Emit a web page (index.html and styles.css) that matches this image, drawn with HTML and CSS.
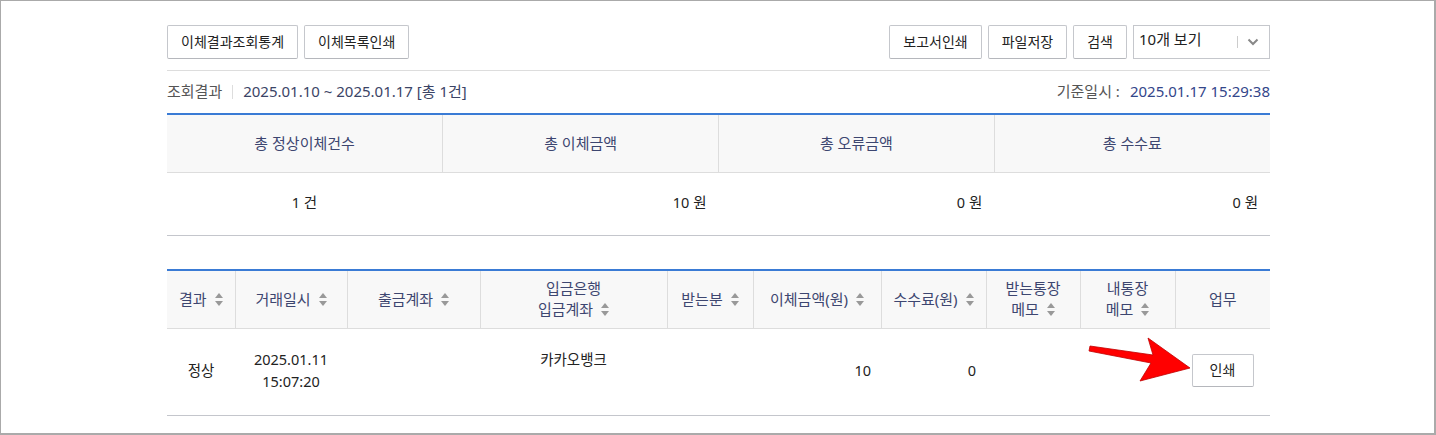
FILE: index.html
```html
<!DOCTYPE html>
<html lang="ko">
<head>
<meta charset="utf-8">
<link rel="stylesheet" href="styles.css">
</head>
<body>
<div class="frame">
  <div class="content">
    <div class="toolbar">
      <div class="btn-group">
        <button class="btn">이체결과조회통계</button>
        <button class="btn">이체목록인쇄</button>
      </div>
      <div class="btn-group">
        <button class="btn">보고서인쇄</button>
        <button class="btn">파일저장</button>
        <button class="btn">검색</button>
        <div class="select">
          <span class="select-text">10개 보기</span>
          <span class="select-sep"></span>
          <svg class="chev" width="12" height="8" viewBox="0 0 12 8"><path d="M1.5 1.5 L6 6 L10.5 1.5" fill="none" stroke="#888" stroke-width="2"/></svg>
        </div>
      </div>
    </div>
    <div class="info">
      <div class="info-left">
        <span class="label">조회결과</span><span class="vsep"></span><span class="value">2025.01.10 ~ 2025.01.17 [총 1건]</span>
      </div>
      <div class="info-right">
        <span class="label">기준일시 :</span><span class="value blue">2025.01.17 15:29:38</span>
      </div>
    </div>
    <table class="tbl summary">
      <thead>
        <tr><th>총 정상이체건수</th><th>총 이체금액</th><th>총 오류금액</th><th>총 수수료</th></tr>
      </thead>
      <tbody>
        <tr><td class="c">1 건</td><td class="r">10 원</td><td class="r">0 원</td><td class="r">0 원</td></tr>
      </tbody>
    </table>
    <table class="tbl list">
      <colgroup>
        <col style="width:68px"><col style="width:112px"><col style="width:133px"><col style="width:187px"><col style="width:86px"><col style="width:128px"><col style="width:105px"><col style="width:94px"><col style="width:95px"><col style="width:95px">
      </colgroup>
      <thead>
        <tr>
          <th>결과<i class="sort"></i></th>
          <th>거래일시<i class="sort"></i></th>
          <th>출금계좌<i class="sort"></i></th>
          <th>입금은행<br>입금계좌<i class="sort"></i></th>
          <th>받는분<i class="sort"></i></th>
          <th>이체금액(원)<i class="sort"></i></th>
          <th>수수료(원)<i class="sort"></i></th>
          <th>받는통장<br>메모<i class="sort"></i></th>
          <th>내통장<br>메모<i class="sort"></i></th>
          <th>업무</th>
        </tr>
      </thead>
      <tbody>
        <tr>
          <td class="c">정상</td>
          <td class="c">2025.01.11<br>15:07:20</td>
          <td></td>
          <td class="c"><div class="bank">카카오뱅크<br>&nbsp;</div></td>
          <td></td>
          <td class="r">10</td>
          <td class="r">0</td>
          <td></td>
          <td></td>
          <td class="c"><button class="btn small">인쇄</button></td>
        </tr>
      </tbody>
    </table>
  </div>
  <svg class="arrow" width="120" height="60" viewBox="1080 330 120 60">
    <polygon points="1090,346 1153,355 1148,338 1190,368 1140,381 1151,363 1089,351" fill="#ff0000" stroke="#c00000" stroke-width="0.8" stroke-linejoin="round"/>
  </svg>
</div>
</body>
</html>
```

FILE: styles.css
```css
* { box-sizing: border-box; }
html, body { margin: 0; padding: 0; background: #fff; }
body {
  font-family: "Noto Sans", "Noto Sans CJK KR", sans-serif;
  font-size: 14px;
  color: #333;
}
.frame {
  position: relative;
  width: 1436px;
  height: 435px;
  border: 1px solid #aaa;
  border-right-width: 2px;
  border-bottom-width: 2px;
  padding: 24px 0 0 166px;
}
.content { width: 1103px; }
.toolbar {
  display: flex;
  justify-content: space-between;
  align-items: center;
  padding-bottom: 11px;
  border-bottom: 1px solid #ddd;
}
.btn-group { display: flex; gap: 6px; }
.btn {
  height: 34px;
  padding: 0 13px;
  border: 1px solid #c5c7cc;
  border-bottom-color: #b5b7bc;
  border-radius: 2px;
  background: #fff;
  font-family: inherit;
  font-size: 14px;
  color: #222;
  line-height: 1;
}
.select {
  width: 137px;
  height: 34px;
  border: 1px solid #c5c7cc;
  display: flex;
  align-items: center;
  padding: 0 10px 0 5px;
}
.select-text { flex: 1; font-size: 15px; color: #222; margin-top: -6px; line-height: 20px; }
.select-sep { width: 1px; height: 12px; background: #ccc; margin-right: 9px; }
.chev { display: block; }
.info {
  display: flex;
  justify-content: space-between;
  align-items: center;
  height: 42px;
  padding-bottom: 3px;
  font-size: 15px;
  line-height: 20px;
}
.info .label { color: #555; }
.info .value { color: #3b4466; }
.info .value.blue { color: #33468a; margin-left: 10px; }
.vsep {
  display: inline-block;
  width: 1px;
  height: 14px;
  background: #ddd;
  margin: 0 10px 0 10px;
  vertical-align: -2px;
}
.tbl {
  width: 100%;
  border-collapse: collapse;
  table-layout: fixed;
  border-top: 2px solid #3a7bd5;
  border-bottom: 1px solid #c4c6cc;
}
.tbl th {
  background: #f8f8f8;
  font-weight: normal;
  font-size: 15px;
  color: #3d4670;
  border-bottom: 1px solid #ddd;
  border-left: 1px solid #ddd;
  line-height: 21px;
}
.tbl th:first-child { border-left: none; }
.tbl td { color: #222; line-height: 22px; font-size: 14.5px; }
.summary th { height: 58px; }
.summary td { height: 63px; padding-bottom: 5px; }
.c { text-align: center; }
.r { text-align: right; }
.summary td.r { padding-right: 12px; }
.summary td.c { padding-left: 0; }
.list { margin-top: 33px; }
.list th { height: 59px; padding: 0; }
.list td { height: 87px; padding: 0 0 4px 0; }
.list td.r { padding-right: 10px; }
.bank { line-height: 22px; padding-bottom: 0; }
.sort {
  display: inline-block;
  width: 8px;
  height: 13px;
  margin-left: 8px;
  vertical-align: -1px;
  position: relative;
}
.sort::before, .sort::after {
  content: "";
  position: absolute;
  left: 0;
  border-left: 4px solid transparent;
  border-right: 4px solid transparent;
}
.sort::before { top: 0; border-bottom: 5px solid #999; }
.sort::after { bottom: 0; border-top: 5px solid #999; }
.btn.small { height: 33px; width: 62px; padding: 0; font-size: 14px; }
.arrow {
  position: absolute;
  left: 1079px;
  top: 329px;
}
```
